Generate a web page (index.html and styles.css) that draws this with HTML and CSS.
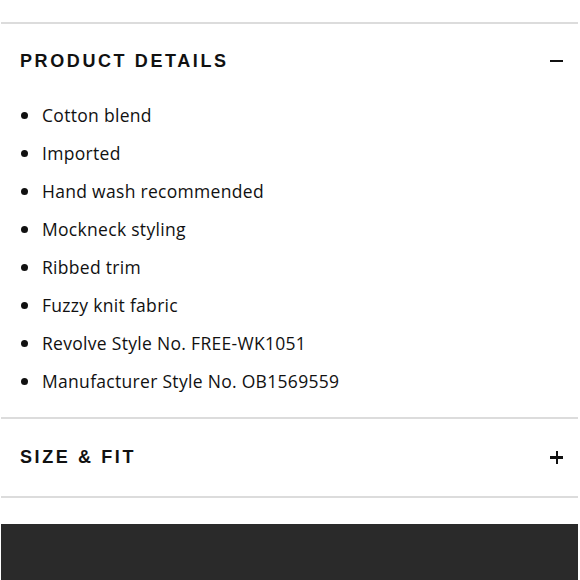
FILE: index.html
```html
<!DOCTYPE html>
<html>
<head>
<meta charset="utf-8">
<link rel="stylesheet" href="styles.css">
</head>
<body>
<div class="page">
  <section class="acc acc-open">
    <div class="acc-head">
      <h2 class="acc-title">PRODUCT DETAILS</h2>
      <span class="icon minus"></span>
    </div>
    <ul class="details">
      <li>Cotton blend</li>
      <li>Imported</li>
      <li>Hand wash recommended</li>
      <li>Mockneck styling</li>
      <li>Ribbed trim</li>
      <li>Fuzzy knit fabric</li>
      <li>Revolve Style No. FREE-WK1051</li>
      <li>Manufacturer Style No. OB1569559</li>
    </ul>
  </section>
  <section class="acc acc-closed">
    <div class="acc-head tall">
      <h2 class="acc-title">SIZE &amp; FIT</h2>
      <span class="icon plus"></span>
    </div>
  </section>
  <div class="footer"></div>
</div>
</body>
</html>
```
FILE: styles.css
```css
html, body {
  margin: 0;
  padding: 0;
  background: #fff;
}
.page {
  width: 580px;
  height: 580px;
  display: flex;
  flex-direction: column;
  padding: 22px 2px 0 1px;
  box-sizing: border-box;
  overflow: hidden;
  font-family: "Open Sans", "Liberation Sans", sans-serif;
  color: #111;
}
.acc {
  border-top: 2px solid #dcdcdc;
}
.acc-closed {
  border-bottom: 2px solid #dcdcdc;
}
.acc-head {
  height: 72px;
  padding: 2px 15px 0 19px;
  box-sizing: border-box;
  display: flex;
  align-items: center;
  justify-content: space-between;
}
.acc-head.tall {
  height: 77px;
  padding-top: 0;
}
.acc-title {
  margin: 0;
  font-family: "Liberation Sans", Arial, sans-serif;
  font-weight: 700;
  font-size: 18px;
  letter-spacing: 2.6px;
  color: #111;
}
.icon {
  position: relative;
  width: 13px;
  height: 13px;
}
.icon::before, .plus::after {
  content: "";
  position: absolute;
  background: #111;
}
.icon::before {
  left: 0;
  right: 0;
  top: 5px;
  height: 2.5px;
}
.plus::after {
  top: 0;
  bottom: 0;
  left: 5.5px;
  width: 2.5px;
}
.details {
  list-style: none;
  margin: 0;
  padding: 0 0 17px 0;
}
.details li {
  height: 38px;
  display: flex;
  align-items: center;
  padding-left: 41px;
  position: relative;
  font-size: 17.5px;
  letter-spacing: 0.3px;
}
.details li::before {
  content: "";
  position: absolute;
  left: 20px;
  top: 16px;
  width: 7px;
  height: 7px;
  border-radius: 50%;
  background: #111;
}
.footer {
  margin-top: 26px;
  flex: 1;
  background: #2a2a2a;
}
```
